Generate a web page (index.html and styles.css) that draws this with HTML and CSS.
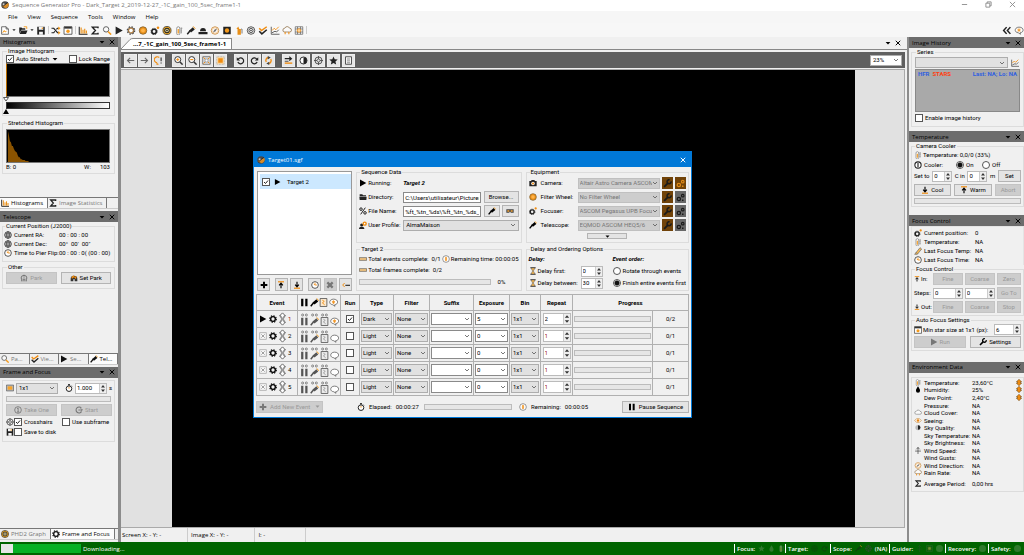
FILE: index.html
```html
<!DOCTYPE html>
<html lang="en">
<head>
<meta charset="utf-8">
<title>Sequence Generator Pro</title>
<link rel="stylesheet" href="styles.css">
</head>
<body>
<svg class="sprite" aria-hidden="true">
  <symbol id="logo" viewBox="0 0 12 12"><circle cx="6" cy="6" r="5.6" fill="#4a4a4a"/><path d="M1 8 11 3a5.6 5.6 0 0 1-4 8z" fill="#d98b26"/><circle cx="4" cy="5" r="1.6" fill="#ccc"/><path d="M2 9 10 2" stroke="#222" stroke-width="1.2"/></symbol>
  <symbol id="new" viewBox="0 0 12 12"><path d="M1.500 1h6l3 3v7h-9zM7.500 1v3h3" fill="#fff" stroke="#444"/><path d="M3 9l2-3 1 2 2-1" stroke="#f59a1b" fill="none" stroke-width="1.300"/></symbol>
  <symbol id="open" viewBox="0 0 12 12"><path d="M1 10V2h3l1 1h4v2H4z" fill="#222"/><path d="M3.500 6H12l-2 4.500H1.500z" fill="#222"/><path d="M7 1h4v3" fill="none" stroke="#f59a1b" stroke-width="1.200"/></symbol>
  <symbol id="save" viewBox="0 0 12 12"><path d="M1 1h10v10.500H1z" fill="#222"/><path d="M3 1h6v4H3zM3.500 7.500h5v4h-5z" fill="#f4f4f4"/><path d="M7 2h1.500v2H7z" fill="#f59a1b"/></symbol>
  <symbol id="folder" viewBox="0 0 12 12"><path d="M1 2h4l1 1.500h4.500V5H1zM.5 5.500h11l-.5 5H1z" fill="#222"/></symbol>
  <symbol id="shuffle" viewBox="0 0 12 12"><path d="M0 3h3l5 6h2M0 9h3l1.500-2M6.500 4.500 8 3h2" fill="none" stroke="#222" stroke-width="1.600"/><path d="M9 .5 12 3 9 5.500zM9 6.500 12 9l-3 2.500z" fill="#f59a1b"/></symbol>
  <symbol id="win" viewBox="0 0 12 12"><path d="M.7 1h10.600v10H.7z" fill="#fff" stroke="#333"/><path d="M1 1h10v2.500H1z" fill="#333"/><circle cx="6" cy="7" r="2.300" fill="#f59a1b"/></symbol>
  <symbol id="hist" viewBox="0 0 12 12"><path d="M1 1v10h11" fill="none" stroke="#222" stroke-width="1.400"/><path d="M3.500 2v8M6 5v5M8.300 3.500V10M10.500 6v4" stroke="#e88f18" stroke-width="1.500"/></symbol>
  <symbol id="sigma" viewBox="0 0 12 12"><path d="M10 3V1.500H2.500L6.500 6l-4 4.500H10V9" fill="none" stroke="#222" stroke-width="1.900"/></symbol>
  <symbol id="mag" viewBox="0 0 12 12"><circle cx="4.800" cy="4.500" r="3.600" fill="#fafafa" stroke="#555" stroke-width="1.200"/><path d="m7.500 7.500 4 4" stroke="#f59a1b" stroke-width="2"/></symbol>
  <symbol id="zin" viewBox="0 0 12 12"><circle cx="5" cy="4.800" r="4" fill="#fafafa" stroke="#333" stroke-width="1.300"/><path d="M3 4.800h4M5 2.800v4" stroke="#f08c10" stroke-width="1.300"/><path d="m8 8 3.500 3.500" stroke="#333" stroke-width="2"/></symbol>
  <symbol id="zout" viewBox="0 0 12 12"><circle cx="5" cy="4.800" r="4" fill="#fafafa" stroke="#333" stroke-width="1.300"/><path d="M3 4.800h4" stroke="#f08c10" stroke-width="1.500"/><path d="m8 8 3.500 3.500" stroke="#333" stroke-width="2"/></symbol>
  <symbol id="play" viewBox="0 0 12 12"><path d="M1.500.7 11 6 1.500 11.300z" fill="currentColor"/></symbol>
  <symbol id="gear" viewBox="0 0 12 12"><circle cx="6" cy="6" r="3.500" fill="none" stroke="currentColor" stroke-width="2"/><circle cx="6" cy="6" r="5" fill="none" stroke="currentColor" stroke-width="1.600" stroke-dasharray="2 1.930"/></symbol>
  <symbol id="gearo" viewBox="0 0 12 12"><circle cx="6" cy="6" r="3.500" fill="#fff" stroke="#444" stroke-width="1.800"/><circle cx="6" cy="6" r="5" fill="none" stroke="#444" stroke-width="1.500" stroke-dasharray="2 1.930"/><circle cx="6" cy="6" r="3.300" fill="none" stroke="#f0a040"/></symbol>
  <symbol id="orb" viewBox="0 0 12 12"><circle cx="6" cy="6" r="5" fill="#f59a1b" stroke="#6f5227" stroke-width="1"/><circle cx="6" cy="6" r="3.200" fill="#ffb347" stroke="#d67a0a" stroke-width=".7"/></symbol>
  <symbol id="foc" viewBox="0 0 12 12"><circle cx="4.800" cy="7.300" r="3" fill="none" stroke="#222" stroke-width="2.200"/><circle cx="4.800" cy="7.300" r="4.200" fill="none" stroke="#222" stroke-dasharray="1.800 1.500"/><circle cx="10" cy="2.200" r="1.700" fill="#f08c10"/></symbol>
  <symbol id="phd" viewBox="0 0 12 12"><circle cx="6" cy="6" r="5.400" fill="#f0a820" stroke="#333"/><circle cx="6" cy="6" r="3" fill="#fff2b0" stroke="#222" stroke-width="1.400"/><circle cx="6" cy="6" r="1.200" fill="#222"/></symbol>
  <symbol id="therm" viewBox="0 0 12 12"><path d="M3 10V3a2 2 0 0 1 4 0v7a2 2 0 0 1-4 0z" fill="#fff" stroke="#777"/><path d="M5 4v6" stroke="#f59a1b" stroke-width="1.600"/><path d="M9 2v8M8 3h2.500M8 5.500h2M8 8h2" stroke="#777" stroke-width=".8"/></symbol>
  <symbol id="scope" viewBox="0 0 12 12"><path d="m1 11 4-5" stroke="currentColor" stroke-width="2"/><path d="m3.500 6 5-4.500 2.500 3L6 8.500z" fill="currentColor"/><path d="m9 .5 2.700 3.200" stroke="#f59a1b" stroke-width="1.300"/></symbol>
  <symbol id="dome" viewBox="0 0 12 12"><path d="M2 7a4 4.500 0 0 1 8 0zM0 8h12v3H0z" fill="#222"/></symbol>
  <symbol id="comp" viewBox="0 0 12 12"><circle cx="6" cy="6" r="5" fill="#fff" stroke="#c98a3b" stroke-width="1.200"/><path d="M9 3 7 7 3 9l2-4z" fill="#777"/><circle cx="6" cy="6" r="3.500" fill="none" stroke="#f0a850" stroke-width=".6"/></symbol>
  <symbol id="flat" viewBox="0 0 12 12"><path d="M1 1h10v10H1z" fill="#222"/><circle cx="6" cy="6" r="2.900" fill="#f59a1b"/></symbol>
  <symbol id="rot" viewBox="0 0 12 12"><path d="M5 .5 2.500 4H4v7.500h4.500V4H6.500z" fill="#e88f18"/><path d="M9 4h1v6" stroke="#555" fill="none"/></symbol>
  <symbol id="rings" viewBox="0 0 12 12"><circle cx="6" cy="6" r="5" fill="none" stroke="currentColor" stroke-width="1"/><circle cx="6" cy="6" r="2.800" fill="none" stroke="currentColor"/><circle cx="6" cy="6" r="1" fill="currentColor"/></symbol>
  <symbol id="checks" viewBox="0 0 12 12"><path d="m1 3 3 3 7-5" fill="none" stroke="#f08c10" stroke-width="2"/><path d="m1 7 3.500 3.500L11 5" fill="none" stroke="#222" stroke-width="2"/></symbol>
  <symbol id="chart" viewBox="0 0 12 12"><path d="M1 1v10h11M2 9l4-2 2 1 3-3" fill="none" stroke="#555" stroke-width="1.200"/><path d="m2 6 3-3 2 2 4-4" fill="none" stroke="#f08c10" stroke-width="1.200"/></symbol>
  <symbol id="cloud" viewBox="0 0 12 12"><path d="M3 9a2.500 2.500 0 0 1 0-5 3.500 3.500 0 0 1 6.500 0A2.500 2.500 0 0 1 9.500 9z" fill="#fafafa" stroke="#777"/></symbol>
  <symbol id="rain" viewBox="0 0 12 12"><path d="M3 8a2.500 2.500 0 0 1 0-5 3.500 3.500 0 0 1 6.500 0A2.500 2.500 0 0 1 9.500 8z" fill="#fafafa" stroke="#8a6a40"/><path d="M3.500 8v3M8.500 8v3" stroke="#f08c10" stroke-width="1.400"/></symbol>
  <symbol id="grid" viewBox="0 0 12 12"><path d="M1 1h10v10H1zM1 4h10M1 8h10M4 1v10M8 1v10" fill="none" stroke="#666"/><circle cx="6" cy="6" r="2.400" fill="#fbd9a5" stroke="#f08c10"/></symbol>
  <symbol id="left" viewBox="0 0 12 12"><path d="M11 6H2M5.500 2.500 2 6l3.500 3.500" fill="none" stroke="#666" stroke-width="1.500"/></symbol>
  <symbol id="right" viewBox="0 0 12 12"><path d="M1 6h9M6.500 2.500 10 6 6.500 9.500" fill="none" stroke="#666" stroke-width="1.500"/></symbol>
  <symbol id="bulb" viewBox="0 0 12 12"><path d="M4 9a4 4 0 1 1 3-7M4 9v2h2" fill="none" stroke="#f08c10" stroke-width="1.500"/><path d="M9.500 2v5M9.500 8.500V10" stroke="#444" stroke-width="1.700"/></symbol>
  <symbol id="fit" viewBox="0 0 12 12"><path d="M1 1h10v10H1z" fill="none" stroke="#555"/><path d="m2 2 8 8M10 2l-8 8" stroke="#f08c10" stroke-width="1.300"/><path d="M4 4h4v4H4z" fill="#fff" stroke="#555" stroke-width=".7"/></symbol>
  <symbol id="one" viewBox="0 0 12 12"><path d="M1 1h10v10H1z" fill="#fbd9a5" stroke="#999" stroke-dasharray="1 1"/><path d="M3 3h6v6H3z" fill="#f08c10"/></symbol>
  <symbol id="ccw" viewBox="0 0 12 12"><path d="M3 4a4 4 0 1 1-.5 4" fill="none" stroke="currentColor" stroke-width="1.600"/><path d="M1 1.500V6h4.500z" fill="currentColor"/></symbol>
  <symbol id="cw" viewBox="0 0 12 12"><path d="M9 4a4 4 0 1 0 .5 4" fill="none" stroke="currentColor" stroke-width="1.600"/><path d="M11 1.500V6H6.500z" fill="currentColor"/></symbol>
  <symbol id="rota" viewBox="0 0 12 12"><path d="M3 8a4 4 0 0 1 3-6M9 4a4 4 0 0 1-3 6" fill="none" stroke="#f08c10" stroke-width="1.800"/><path d="m5 0 4 2-4 2.500zM7 7.500v4.500L3 10z" fill="#444"/></symbol>
  <symbol id="swap" viewBox="0 0 12 12"><path d="M1 3.500h8M7 1l3 2.500L7 6" fill="none" stroke="#222" stroke-width="1.400"/><path d="M1 7h5" stroke="#222"/><path d="M1 9.500h10" stroke="#f08c10" stroke-width="1.800"/></symbol>
  <symbol id="half" viewBox="0 0 12 12"><circle cx="6" cy="6" r="4.700" fill="#fff" stroke="#222" stroke-width="1.200"/><path d="M6 1.500a4.500 4.500 0 0 1 0 9z" fill="#222"/></symbol>
  <symbol id="cross" viewBox="0 0 12 12"><circle cx="6" cy="6" r="4.700" fill="none" stroke="#444" stroke-width="1.200"/><circle cx="6" cy="6" r="2" fill="none" stroke="#444"/><path d="M6 0v4M6 8v4M0 6h4M8 6h4" stroke="#444" stroke-width="1.100"/></symbol>
  <symbol id="star" viewBox="0 0 12 12"><path d="m6 .5 1.600 3.700 4 .4-3 2.700.9 4L6 9.200l-3.500 2.100.9-4-3-2.700 4-.4z" fill="currentColor"/></symbol>
  <symbol id="calc" viewBox="0 0 12 12"><path d="M2 1h8v10H2z" fill="#f4f4f4" stroke="#444" stroke-width="1.200"/><path d="M4 4h4M4 6.500h4M4 9h4" stroke="#777"/></symbol>
  <symbol id="globe" viewBox="0 0 12 12"><circle cx="6" cy="6" r="5" fill="#fff" stroke="#333" stroke-width="1.200"/><ellipse cx="6" cy="6" rx="2.300" ry="5" fill="none" stroke="#333"/><path d="M1 6h10M1.800 3.500h8.400M1.800 8.500h8.400M6 1v10" stroke="#333" stroke-width=".9"/></symbol>
  <symbol id="clock" viewBox="0 0 12 12"><circle cx="6" cy="6" r="5" fill="#fff" stroke="#333" stroke-width="1.200"/><path d="M6 2.500V6l-2-1.500M6 6h3" fill="none" stroke="#f08c10" stroke-width="1.200"/></symbol>
  <symbol id="timer" viewBox="0 0 12 12"><circle cx="6" cy="7" r="4.200" fill="#fff" stroke="#222" stroke-width="1.500"/><path d="M4.500.8h3M6 1v2M9.500 2.500l1 1" stroke="#222" stroke-width="1.300"/><path d="M6 7V4.500" stroke="#f08c10" stroke-width="1.300"/></symbol>
  <symbol id="remain" viewBox="0 0 12 12"><circle cx="6" cy="6" r="5" fill="#fff" stroke="#666"/><path d="M6 2.500 8 5H7v2h1L6 9.500 4 7h1V5H4z" fill="#f08c10"/></symbol>
  <symbol id="house" viewBox="0 0 12 12"><path d="M1.500 6.500a4.500 4.500 0 0 1 9 0M2.500 6v5M9.500 6v5M4.700 11V8h2.600v3" fill="none" stroke="currentColor" stroke-width="1.500"/><path d="M6 1v6" stroke="currentColor"/></symbol>
  <symbol id="spark" viewBox="0 0 12 12"><path d="M1 7a5 4.500 0 0 1 10 0v4H7V8H5v3H1z" fill="#333"/><path d="m2 5 3-3 2 2 3-1-1 5-3-3-3 2z" fill="#f08c10"/></symbol>
  <symbol id="chip" viewBox="0 0 12 12"><path d="M.6 1.600h10.800v8.800H.6z" fill="#bbb" stroke="#555"/><path d="M2.500 3.500h7v5h-7z" fill="#f8a52b"/></symbol>
  <symbol id="circ1" viewBox="0 0 12 12"><circle cx="6" cy="6" r="5" fill="none" stroke="#777" stroke-width="1.300"/><path d="M4.500 4 6.200 3v6M4.500 9h3.400" fill="none" stroke="#777" stroke-width="1.300"/></symbol>
  <symbol id="loop" viewBox="0 0 12 12"><path d="M9.800 8.500A4.500 4.500 0 1 1 9.500 3" fill="none" stroke="#777" stroke-width="1.600"/><path d="M5 6h6M8.500 3.500 11 6 8.500 8.500" fill="none" stroke="#777" stroke-width="1.400"/></symbol>
  <symbol id="plus" viewBox="0 0 12 12"><path d="M6 1v10M1 6h10" stroke="currentColor" stroke-width="3"/></symbol>
  <symbol id="top" viewBox="0 0 12 12"><path d="M1.500 1.200h9" stroke="#f08c10" stroke-width="1.800"/><path d="M6 11V4M3.200 6.500 6 3.200l2.800 3.300" fill="none" stroke="currentColor" stroke-width="1.700"/></symbol>
  <symbol id="bot" viewBox="0 0 12 12"><path d="M1.500 10.800h9" stroke="#f08c10" stroke-width="1.800"/><path d="M6 1v7M3.200 5.500 6 8.800l2.800-3.300" fill="none" stroke="currentColor" stroke-width="1.700"/></symbol>
  <symbol id="xx" viewBox="0 0 12 12"><path d="m2 2 8 8M10 2l-8 8" stroke="#777" stroke-width="3.400"/></symbol>
  <symbol id="back" viewBox="0 0 12 12"><path d="M4 3 1 6l3 3" fill="none" stroke="#f08c10" stroke-width="1.500"/><path d="M5 6.500h7" stroke="#333" stroke-width="1.800"/></symbol>
  <symbol id="bar" viewBox="0 0 12 12"><path d="M.5 4h11v4H.5z" fill="#f8c880" stroke="#555"/></symbol>
  <symbol id="pct" viewBox="0 0 12 12"><path d="m9.500 1-7 10" stroke="#222" stroke-width="1.500"/><circle cx="3" cy="3.200" r="1.900" fill="none" stroke="#222" stroke-width="1.500"/><circle cx="9" cy="8.800" r="1.900" fill="none" stroke="#222" stroke-width="1.500"/></symbol>
  <symbol id="user" viewBox="0 0 12 12"><circle cx="4" cy="6" r="2.300" fill="#222"/><path d="M0 12a4 3.500 0 0 1 8 0z" fill="#222"/><circle cx="8.500" cy="4" r="3.300" fill="#f08c10"/><circle cx="8.500" cy="4" r="1.200" fill="#fff"/></symbol>
  <symbol id="cam" viewBox="0 0 12 12"><path d="M.5 3H3l1-1.500h4L9 3h2.500v8H.5z" fill="#222"/><circle cx="6" cy="6.800" r="2.700" fill="#f4f4f4"/><circle cx="6" cy="6.800" r="1.500" fill="#f08c10"/></symbol>
  <symbol id="wrench" viewBox="0 0 12 12"><path d="m1.500 10.500 5-5" stroke="currentColor" stroke-width="2.400"/><path d="M10.800 3.200a2.700 2.700 0 1 1-2-2.200" fill="none" stroke="currentColor" stroke-width="2"/></symbol>
  <symbol id="cogs" viewBox="0 0 12 12"><circle cx="3.800" cy="8" r="2.200" fill="none" stroke="currentColor" stroke-width="1.700"/><circle cx="9" cy="3.500" r="1.700" fill="none" stroke="currentColor" stroke-width="1.500"/><path d="M8 8.500h2v2H8z" fill="currentColor"/></symbol>
  <symbol id="hour" viewBox="0 0 12 12"><path d="M2 1h8M2 11h8" stroke="#333" stroke-width="1.600"/><path d="M3 1.500h6L6.500 6 9 10.500H3L5.500 6z" fill="#f8b850" stroke="#555" stroke-width=".8"/></symbol>
  <symbol id="goggles" viewBox="0 0 12 12"><path d="M.5 3.500h11v5h-4L6 7 4.500 8.500h-4z" fill="#444"/><path d="M2 5h3v2H2zM7 5h3v2H7z" fill="#f8a838"/></symbol>
  <symbol id="pause" viewBox="0 0 12 12"><path d="M3 1v10M8.500 1v10" stroke="currentColor" stroke-width="3"/></symbol>
  <symbol id="script" viewBox="0 0 12 12"><path d="M1.500.7h9v10.600h-9z" fill="#fbe9cf" stroke="#444"/><path d="M4.500 3 7 4.500 4.500 6.500 7.500 9" fill="none" stroke="#f08c10" stroke-width="1.200"/></symbol>
  <symbol id="bubble" viewBox="0 0 12 12"><path d="M6 1.500c7 0 7 7 1.500 7.500L8 11 5 9C-1 8.500 0 1.500 6 1.500z" fill="#fff" stroke="#555"/></symbol>
  <symbol id="bubbleo" viewBox="0 0 12 12"><path d="M6 1.500c7 0 7 7 1.500 7.500L8 11 5 9C-1 8.500 0 1.500 6 1.500z" fill="#fff" stroke="#555"/><path d="M6 3v5M3.800 4.200l4.400 2.600M8.200 4.200 3.800 6.800" stroke="#f08c10"/></symbol>
  <symbol id="oo" viewBox="0 0 12 4"><circle cx="3.500" cy="2" r="1.400" fill="#ddd" stroke="#666" stroke-width=".9"/><circle cx="8.500" cy="2" r="1.400" fill="#ddd" stroke="#666" stroke-width=".9"/></symbol>
  <symbol id="ud" viewBox="0 0 8 16"><path d="M4 1 7.400 4.500H5.700V7H2.300V4.500H.6zM4 15l3.400-3.500H5.700V9H2.300v2.500H.6z" fill="#fff" stroke="#555" stroke-width="1"/></symbol>
  <symbol id="spin" viewBox="0 0 6 10"><path d="M.8 3.800 3 1.200l2.200 2.600zM.8 6.200 3 8.800l2.200-2.600z" fill="#333"/></symbol>
  <symbol id="xbox" viewBox="0 0 12 12"><path d="M1 1h10v10H1z" fill="#f8f8f8" stroke="#aaa" stroke-width="1.300"/><path d="m3.500 3.500 5 5m0-5-5 5" stroke="#888" stroke-width="1.200"/></symbol>
  <symbol id="power" viewBox="0 0 12 12"><circle cx="6" cy="6" r="4.700" fill="#fff" stroke="#222" stroke-width="1.600"/><path d="M6 3v6" stroke="#222" stroke-width="1.700"/></symbol>
  <symbol id="tape" viewBox="0 0 12 12"><path d="M1 11 9 1l2.500 2L5 11z" fill="#f8b850" stroke="#666"/><path d="m3 8 2 2" stroke="#555"/></symbol>
  <symbol id="drop" viewBox="0 0 12 12"><path d="M6 .5C8 4 9.500 5.500 9.500 8a3.500 3.500 0 0 1-7 0C2.500 5.500 4 4 6 .5z" fill="currentColor"/></symbol>
  <symbol id="eye" viewBox="0 0 12 12"><path d="M.5 6C3 1.500 9 1.500 11.500 6 9 10.500 3 10.500.5 6z" fill="#fff" stroke="#c07a20"/><circle cx="6" cy="6" r="2.200" fill="#e88410"/></symbol>
  <symbol id="moon" viewBox="0 0 12 12"><circle cx="6" cy="6" r="4.500" fill="#bbb"/><path d="M6 2a4 4 0 0 1 0 8z" fill="#222"/></symbol>
  <symbol id="vane" viewBox="0 0 12 12"><path d="M6 0v12M1 7h10M3 4l3-3 3 3" fill="none" stroke="#444" stroke-width="1.200"/></symbol>
  <symbol id="up" viewBox="0 0 12 12"><path d="m6 .5 4.500 4.500H8.500v2h2L6 11.500 1.500 7h2V5h-2z" fill="#f08c10" stroke="#5b3a10" stroke-width=".9"/></symbol>
  <symbol id="caret" viewBox="0 0 8 8"><path d="M.8 2.500h6.400L4 6z" fill="currentColor"/></symbol>
  <symbol id="close" viewBox="0 0 8 8"><path d="m1 1 6 6m0-6L1 7" stroke="currentColor" stroke-width="1.300"/></symbol>
  <symbol id="chev" viewBox="0 0 12 12"><path d="M5.500 1.500 1.500 6l4 4.500M10.500 1.500 6.500 6l4 4.500" fill="none" stroke="#222" stroke-width="2"/></symbol>
</svg>

<header class="titlebar">
  <svg class="i"><use href="#logo"/></svg>
  <span class="grow">Sequence Generator Pro - Dark_Target 2_2019-12-27_-1C_gain_100_5sec_frame1-1</span>
  <span class="winctl">
    <svg viewBox="0 0 8 8"><path d="M1 4h6" stroke="#888"/></svg>
    <svg viewBox="0 0 8 8"><path d="M1 2.500h4.500V7H1zM2.500 2.500V1H7v4.500H5.500" fill="none" stroke="#888"/></svg>
    <svg viewBox="0 0 8 8"><path d="m1 1 6 6m0-6L1 7" stroke="#888"/></svg>
  </span>
</header>
<nav class="menu"><a href="#">File</a><a href="#">View</a><a href="#">Sequence</a><a href="#">Tools</a><a href="#">Window</a><a href="#">Help</a></nav>
<div class="tools">
  <svg class="i"><use href="#new"/></svg><svg class="car"><use href="#caret"/></svg><svg class="i"><use href="#open"/></svg><svg class="car"><use href="#caret"/></svg><svg class="i"><use href="#save"/></svg><i></i>
  <svg class="i"><use href="#shuffle"/></svg><svg class="i"><use href="#win"/></svg><i></i>
  <svg class="i"><use href="#hist"/></svg><svg class="i"><use href="#sigma"/></svg><svg class="i"><use href="#mag"/></svg><svg class="i"><use href="#play"/></svg><svg class="i"><use href="#gearo"/></svg><svg class="i"><use href="#orb"/></svg><svg class="i"><use href="#foc"/></svg><svg class="i"><use href="#phd"/></svg><svg class="i"><use href="#therm"/></svg><svg class="i"><use href="#scope"/></svg><svg class="i"><use href="#dome"/></svg><svg class="i"><use href="#comp"/></svg><svg class="i"><use href="#flat"/></svg><svg class="i"><use href="#rot"/></svg><svg class="i"><use href="#rings"/></svg><svg class="i"><use href="#checks"/></svg><svg class="i"><use href="#chart"/></svg><svg class="i"><use href="#rain"/></svg><svg class="i"><use href="#grid"/></svg><i></i>
  <span class="grow"></span>
  <svg class="i"><use href="#chev"/></svg><svg class="i last"><use href="#bubbleo"/></svg>
</div>

<main class="work">
  <aside class="side left">
    <section class="panel p-hist">
      <h2><span class="grow">Histograms</span><svg class="s"><use href="#caret"/></svg><svg class="s"><use href="#close"/></svg></h2>
      <div class="pbody">
        <fieldset><legend>Image Histogram</legend>
          <div class="row hopts"><label><input type="checkbox" checked>Auto Stretch</label><svg class="s"><use href="#caret"/></svg><label class="push"><input type="checkbox">Lock Range</label></div>
          <div class="plot first"></div>
          <svg class="mark" viewBox="0 0 6 5"><path d="M.5.5h5L3 4z" fill="#fff" stroke="#333" stroke-width=".8"/></svg>
          <div class="ramp"></div>
          <svg class="mark" viewBox="0 0 6 5"><path d="M0 5h6L3 0z" fill="#000"/></svg>
        </fieldset>
        <fieldset class="stretch"><legend>Stretched Histogram</legend>
          <svg class="plot" viewBox="0 0 104 34" preserveAspectRatio="none"><path d="M1 34V1l1 5 1 6 1 1 1 4 1 0 1 3 1 2 1 1 1 1 1 3 1 2 1 0 1 2 1 0 1 1 2 0 1 1 3 0v1z" fill="#8a5300"/></svg>
          <div class="row bw"><span>B: 0</span><span class="push">W:</span><span>103</span></div>
        </fieldset>
      </div>
      <div class="tabs"><button class="on"><svg class="i"><use href="#hist"/></svg>Histograms</button><button><svg class="i"><use href="#sigma"/></svg>Image Statistics</button></div>
    </section>
    <section class="panel p-tel">
      <h2><span class="grow">Telescope</span><svg class="s"><use href="#caret"/></svg><svg class="s"><use href="#close"/></svg></h2>
      <div class="pbody">
        <fieldset class="pos"><legend>Current Position (J2000)</legend>
          <div class="coord"><svg class="i"><use href="#globe"/></svg><span>Current RA:</span><span>00 : 00 : 00</span></div>
          <div class="coord"><svg class="i"><use href="#globe"/></svg><span>Current Dec:</span><span>00° &nbsp;00' &nbsp;00"</span></div>
          <div class="coord"><svg class="i"><use href="#clock"/></svg><span>Time to Pier Flip:</span><span>00 : 00 : 0( (00 : 00)</span></div>
        </fieldset>
        <fieldset class="other"><legend>Other</legend>
          <div class="pair"><button disabled><svg class="i dis"><use href="#house"/></svg>Park</button><button><svg class="i"><use href="#spark"/></svg>Set Park</button></div>
        </fieldset>
      </div>
      <div class="tabs four"><button><svg class="i"><use href="#mag"/></svg>Pa...</button><button><svg class="i"><use href="#checks"/></svg>Vie...</button><button><svg class="i"><use href="#play"/></svg>Se...</button><button class="on"><svg class="i"><use href="#scope"/></svg>Tel...</button></div>
    </section>
    <section class="panel p-frame">
      <h2><span class="grow">Frame and Focus</span><svg class="s"><use href="#caret"/></svg><svg class="s"><use href="#close"/></svg></h2>
      <div class="pbody">
        <div class="box">
          <div class="row frow"><svg class="i"><use href="#chip"/></svg><select aria-label="Binning" class="grow"><option>1x1</option></select><svg class="i tm"><use href="#timer"/></svg><span class="num grow"><input aria-label="Seconds" value="1.000"><svg><use href="#spin"/></svg></span>s</div>
          <div class="prog"></div>
          <div class="pair"><button disabled><svg class="i"><use href="#circ1"/></svg>Take One</button><button disabled><svg class="i"><use href="#loop"/></svg>Start</button></div>
          <div class="fopts"><label><svg class="i"><use href="#cross"/></svg><input type="checkbox" checked>Crosshairs</label><label><input type="checkbox">Use subframe</label><label><svg class="i"><use href="#save"/></svg><input type="checkbox">Save to disk</label></div>
        </div>
      </div>
      <div class="tabs"><button><svg class="i"><use href="#phd"/></svg>PHD2 Graph</button><button class="on"><svg class="i"><use href="#gear"/></svg>Frame and Focus</button></div>
    </section>
  </aside>

  <section class="doc">
    <div class="doctabs"><div class="slant"><svg viewBox="0 0 12 11" preserveAspectRatio="none"><path d="M0 11 9 1.500Q10 .5 12 .5V11z" fill="#fff"/><path d="M0 11 9 1.500Q10 .5 12 .5" fill="none" stroke="#888"/></svg><b>...7_-1C_gain_100_5sec_frame1-1</b></div><span class="grow"></span><svg class="s"><use href="#caret"/></svg><svg class="s"><use href="#close"/></svg></div>
    <div class="dtools">
      <div><button aria-label="Back"><svg class="i"><use href="#left"/></svg></button><button aria-label="Forward"><svg class="i"><use href="#right"/></svg></button><button aria-label="Hint"><svg class="i"><use href="#bulb"/></svg></button></div>
      <div><button aria-label="Zoom in"><svg class="i"><use href="#zin"/></svg></button><button aria-label="Zoom out"><svg class="i"><use href="#zout"/></svg></button><button aria-label="Fit"><svg class="i"><use href="#fit"/></svg></button><button aria-label="Actual size"><svg class="i"><use href="#one"/></svg></button></div>
      <div><button aria-label="Rotate left"><svg class="i"><use href="#ccw"/></svg></button><button aria-label="Rotate right"><svg class="i"><use href="#cw"/></svg></button><button aria-label="Rotate"><svg class="i"><use href="#rota"/></svg></button></div>
      <div class="wide"><button aria-label="Swap"><svg class="i"><use href="#swap"/></svg></button><button aria-label="Contrast"><svg class="i"><use href="#half"/></svg></button><button aria-label="Crosshair"><svg class="i"><use href="#cross"/></svg></button><button aria-label="Stars"><svg class="i"><use href="#star"/></svg></button><button aria-label="Statistics"><svg class="i"><use href="#calc"/></svg></button></div>
      <span class="grow"></span>
      <select aria-label="Zoom" class="zoomsel"><option>23%</option></select>
    </div>
    <div class="canvas">
      <div class="image"></div>
      <form class="dialog">
        <div class="dtitle"><svg class="i"><use href="#logo"/></svg><span class="grow">Target01.sgf</span><svg class="s"><use href="#close"/></svg></div>
        <div class="dbody">
          <div class="upper">
            <div class="targets">
              <div class="list"><label class="item"><input type="checkbox" checked><svg class="i"><use href="#play"/></svg>Target 2</label></div>
              <div class="tbtns"><button type="button" aria-label="Add"><svg class="i"><use href="#plus"/></svg></button><span></span><button type="button" aria-label="Move up"><svg class="i"><use href="#top"/></svg></button><button type="button" aria-label="Move down"><svg class="i"><use href="#bot"/></svg></button><span></span><button type="button" aria-label="Schedule"><svg class="i"><use href="#clock"/></svg></button><button type="button" aria-label="Delete" disabled><svg class="i"><use href="#xx"/></svg></button><button type="button" aria-label="Reset"><svg class="i"><use href="#back"/></svg></button></div>
            </div>
            <div class="col">
              <fieldset class="tall"><legend>Sequence Data</legend>
                <div class="fr"><svg class="i"><use href="#play"/></svg><span>Running:</span><strong class="em">Target 2</strong></div>
                <div class="fr"><svg class="i"><use href="#folder"/></svg><label for="dir">Directory:</label><input id="dir" value="C:\Users\utilisateur\Pictures"><button type="button" class="brw">Browse...</button></div>
                <div class="fr"><svg class="i"><use href="#pct"/></svg><label for="fn">File Name:</label><input id="fn" value="%ft_%tn_%ds\%ft_%tn_%ds_"><span class="two"><button type="button" aria-label="Pattern"><svg class="i"><use href="#scope"/></svg></button><button type="button" aria-label="Preview"><svg class="i"><use href="#goggles"/></svg></button></span></div>
                <div class="fr"><svg class="i"><use href="#user"/></svg><label for="up1">User Profile:</label><select id="up1"><option>AlmaMaison</option></select></div>
              </fieldset>
              <fieldset class="short"><legend>Target 2</legend>
                <div class="tl"><svg class="i"><use href="#bar"/></svg>Total events complete: &nbsp;0/1<span class="push rem"><svg class="i"><use href="#remain"/></svg>Remaining time: 00:00:05</span></div>
                <div class="tl"><svg class="i"><use href="#bar"/></svg>Total frames complete: &nbsp;0/2</div>
                <div class="tl last"><div class="prog grow"></div><span class="pc">0%</span></div>
              </fieldset>
            </div>
            <div class="col">
              <fieldset class="tall"><legend>Equipment</legend>
                <div class="eq"><svg class="i"><use href="#cam"/></svg><label for="e1">Camera:</label><select id="e1" disabled><option>Altair Astro Camera ASCOM</option></select><button type="button" class="br" aria-label="Camera settings"><svg class="i"><use href="#wrench"/></svg></button><button type="button" class="br" aria-label="Connect camera"><svg class="i or"><use href="#cogs"/></svg></button></div>
                <div class="eq"><svg class="i"><use href="#orb"/></svg><label for="e2">Filter Wheel:</label><select id="e2" disabled><option>No Filter Wheel</option></select><button type="button" class="br" aria-label="Filter wheel settings"><svg class="i"><use href="#wrench"/></svg></button><button type="button" class="gr" aria-label="Connect filter wheel"><svg class="i"><use href="#cogs"/></svg></button></div>
                <div class="eq"><svg class="i"><use href="#foc"/></svg><label for="e3">Focuser:</label><select id="e3" disabled><option>ASCOM Pegasus UPB Focuser</option></select><button type="button" class="br" aria-label="Focuser settings"><svg class="i"><use href="#wrench"/></svg></button><button type="button" class="gr" aria-label="Connect focuser"><svg class="i"><use href="#cogs"/></svg></button></div>
                <div class="eq"><svg class="i"><use href="#scope"/></svg><label for="e4">Telescope:</label><select id="e4" disabled><option>EQMOD ASCOM HEQ5/6</option></select><button type="button" class="br" aria-label="Telescope settings"><svg class="i"><use href="#wrench"/></svg></button><button type="button" class="gr" aria-label="Connect telescope"><svg class="i"><use href="#cogs"/></svg></button></div>
                <button type="button" class="expand" aria-label="More"><svg class="car"><use href="#caret"/></svg></button>
              </fieldset>
              <fieldset class="short"><legend>Delay and Ordering Options</legend>
                <div class="ord">
                  <div><strong class="em">Delay:</strong>
                    <div class="dl"><svg class="i"><use href="#hour"/></svg><label for="d1">Delay first:</label><span class="num"><input id="d1" value="0"><svg><use href="#spin"/></svg></span></div>
                    <div class="dl"><svg class="i"><use href="#hour"/></svg><label for="d2">Delay between:</label><span class="num"><input id="d2" value="30"><svg><use href="#spin"/></svg></span></div></div>
                  <div><strong class="em">Event order:</strong>
                    <label class="dl"><input type="radio" name="ord">Rotate through events</label>
                    <label class="dl"><input type="radio" name="ord" checked>Finish entire events first</label></div>
                </div>
              </fieldset>
            </div>
          </div>
          <table class="events">
            <colgroup><col class="c1"><col class="c2"><col class="c3"><col class="c4"><col class="c5"><col class="c6"><col class="c7"><col class="c8"><col class="c9"><col class="c10"><col class="c11"></colgroup>
            <thead><tr><th>Event</th><th><div class="ic"><svg class="i"><use href="#pause"/></svg><svg class="i"><use href="#scope"/></svg><svg class="i"><use href="#script"/></svg><svg class="i"><use href="#bubbleo"/></svg></div></th><th>Run</th><th>Type</th><th>Filter</th><th>Suffix</th><th>Exposure</th><th>Bin</th><th>Repeat</th><th colspan="2">Progress</th></tr></thead>
            <tbody>
            <tr><td><div class="ev"><svg class="i"><use href="#play"/></svg><svg class="i"><use href="#gear"/></svg><svg class="ud"><use href="#ud"/></svg><span class="red">1</span></div></td><td><div class="ic dim"><span><svg class="oo"><use href="#oo"/></svg><svg class="i"><use href="#pause"/></svg></span><span><svg class="oo"><use href="#oo"/></svg><svg class="i"><use href="#scope"/></svg></span><span class="sc"><svg class="oo"><use href="#oo"/></svg><svg class="i"><use href="#script"/></svg></span><span><svg class="oo"></svg><svg class="i"><use href="#bubbleo"/></svg></span></div></td><td><input type="checkbox" aria-label="Run 1" checked></td><td><select aria-label="Type 1"><option>Dark</option></select></td><td><select aria-label="Filter 1"><option>None</option></select></td><td><select class="w" aria-label="Suffix 1"><option></option></select></td><td><select class="w" aria-label="Exposure 1"><option>5</option></select></td><td><select aria-label="Bin 1"><option>1x1</option></select></td><td><span class="num"><input aria-label="Repeat 1" value="2"><svg><use href="#spin"/></svg></span></td><td><div class="prog"></div></td><td>0/2</td></tr>
            <tr><td><div class="ev"><svg class="i"><use href="#xbox"/></svg><svg class="i"><use href="#gear"/></svg><svg class="ud"><use href="#ud"/></svg><span>2</span></div></td><td><div class="ic dim"><span><svg class="oo"><use href="#oo"/></svg><svg class="i"><use href="#pause"/></svg></span><span><svg class="oo"><use href="#oo"/></svg><svg class="i"><use href="#scope"/></svg></span><span class="sc"><svg class="oo"><use href="#oo"/></svg><svg class="i"><use href="#script"/></svg></span><span><svg class="oo"></svg><svg class="i"><use href="#bubble"/></svg></span></div></td><td><input type="checkbox" aria-label="Run 2"></td><td><select aria-label="Type 2"><option>Light</option></select></td><td><select aria-label="Filter 2"><option>None</option></select></td><td><select class="w" aria-label="Suffix 2"><option></option></select></td><td><select class="w" aria-label="Exposure 2"><option>0</option></select></td><td><select aria-label="Bin 2"><option>1x1</option></select></td><td><span class="num red"><input aria-label="Repeat 2" value="1"><svg><use href="#spin"/></svg></span></td><td><div class="prog"></div></td><td>0/1</td></tr>
            <tr><td><div class="ev"><svg class="i"><use href="#xbox"/></svg><svg class="i"><use href="#gear"/></svg><svg class="ud"><use href="#ud"/></svg><span>3</span></div></td><td><div class="ic dim"><span><svg class="oo"><use href="#oo"/></svg><svg class="i"><use href="#pause"/></svg></span><span><svg class="oo"><use href="#oo"/></svg><svg class="i"><use href="#scope"/></svg></span><span class="sc"><svg class="oo"><use href="#oo"/></svg><svg class="i"><use href="#script"/></svg></span><span><svg class="oo"></svg><svg class="i"><use href="#bubble"/></svg></span></div></td><td><input type="checkbox" aria-label="Run 3"></td><td><select aria-label="Type 3"><option>Light</option></select></td><td><select aria-label="Filter 3"><option>None</option></select></td><td><select class="w" aria-label="Suffix 3"><option></option></select></td><td><select class="w" aria-label="Exposure 3"><option>0</option></select></td><td><select aria-label="Bin 3"><option>1x1</option></select></td><td><span class="num red"><input aria-label="Repeat 3" value="1"><svg><use href="#spin"/></svg></span></td><td><div class="prog"></div></td><td>0/1</td></tr>
            <tr><td><div class="ev"><svg class="i"><use href="#xbox"/></svg><svg class="i"><use href="#gear"/></svg><svg class="ud"><use href="#ud"/></svg><span>4</span></div></td><td><div class="ic dim"><span><svg class="oo"><use href="#oo"/></svg><svg class="i"><use href="#pause"/></svg></span><span><svg class="oo"><use href="#oo"/></svg><svg class="i"><use href="#scope"/></svg></span><span class="sc"><svg class="oo"><use href="#oo"/></svg><svg class="i"><use href="#script"/></svg></span><span><svg class="oo"></svg><svg class="i"><use href="#bubble"/></svg></span></div></td><td><input type="checkbox" aria-label="Run 4"></td><td><select aria-label="Type 4"><option>Light</option></select></td><td><select aria-label="Filter 4"><option>None</option></select></td><td><select class="w" aria-label="Suffix 4"><option></option></select></td><td><select class="w" aria-label="Exposure 4"><option>0</option></select></td><td><select aria-label="Bin 4"><option>1x1</option></select></td><td><span class="num red"><input aria-label="Repeat 4" value="1"><svg><use href="#spin"/></svg></span></td><td><div class="prog"></div></td><td>0/1</td></tr>
            <tr><td><div class="ev"><svg class="i"><use href="#xbox"/></svg><svg class="i"><use href="#gear"/></svg><svg class="ud"><use href="#ud"/></svg><span>5</span></div></td><td><div class="ic dim"><span><svg class="oo"><use href="#oo"/></svg><svg class="i"><use href="#pause"/></svg></span><span><svg class="oo"><use href="#oo"/></svg><svg class="i"><use href="#scope"/></svg></span><span class="sc"><svg class="oo"><use href="#oo"/></svg><svg class="i"><use href="#script"/></svg></span><span><svg class="oo"></svg><svg class="i"><use href="#bubble"/></svg></span></div></td><td><input type="checkbox" aria-label="Run 5"></td><td><select aria-label="Type 5"><option>Light</option></select></td><td><select aria-label="Filter 5"><option>None</option></select></td><td><select class="w" aria-label="Suffix 5"><option></option></select></td><td><select class="w" aria-label="Exposure 5"><option>0</option></select></td><td><select aria-label="Bin 5"><option>1x1</option></select></td><td><span class="num red"><input aria-label="Repeat 5" value="1"><svg><use href="#spin"/></svg></span></td><td><div class="prog"></div></td><td>0/1</td></tr>
            </tbody>
          </table>
          <div class="dfoot"><button type="button" class="add" disabled><svg class="i dis"><use href="#plus"/></svg><span>Add New Event</span><svg class="car"><use href="#caret"/></svg></button><span class="el"><svg class="i"><use href="#timer"/></svg><span>Elapsed:</span><span>00:00:27</span></span><div class="prog grow"></div><span class="re"><svg class="i"><use href="#remain"/></svg><span>Remaining:</span><span>00:00:05</span></span><button type="button" class="ps"><svg class="i"><use href="#pause"/></svg>Pause Sequence</button></div>
        </div>
      </form>
    </div>
    <div class="coords"><span>Screen X: - Y: -</span><span>Image X: - Y: -</span><span>I: -</span></div>
  </section>

  <aside class="side right">
    <section class="panel r1">
      <h2><span class="grow">Image History</span><svg class="s"><use href="#caret"/></svg><svg class="s"><use href="#close"/></svg></h2>
      <div class="pbody"><fieldset><legend>Series</legend>
        <div class="row series"><select class="grow" aria-label="Series"><option></option></select><svg class="i"><use href="#chart"/></svg></div>
        <div class="hfr"><b>HFR</b><b class="st">STARS</b><b class="push">Last: NA; Lo: NA</b></div>
        <label class="row"><input type="checkbox">Enable image history</label>
      </fieldset></div>
    </section>
    <section class="panel r2">
      <h2><span class="grow">Temperature</span><svg class="s"><use href="#caret"/></svg><svg class="s"><use href="#close"/></svg></h2>
      <div class="pbody"><fieldset><legend>Camera Cooler</legend>
        <div class="row t1"><svg class="i"><use href="#therm"/></svg>Temperature: 0,0/0 (33%)</div>
        <div class="row t2"><svg class="i"><use href="#power"/></svg><span class="cl">Cooler:</span><label><input type="radio" name="cool" checked>On</label><label><input type="radio" name="cool">Off</label></div>
        <div class="row t3"><label for="st">Set to</label><span class="num"><input id="st" value="0"><svg><use href="#spin"/></svg></span><label for="ci">C in</label><span class="num"><input id="ci" value="0"><svg><use href="#spin"/></svg></span>m<button class="push">Set</button></div>
        <div class="three"><button><svg class="i"><use href="#bot"/></svg>Cool</button><button><svg class="i"><use href="#top"/></svg>Warm</button><button disabled>Abort</button></div>
        <div class="prog"></div>
      </fieldset></div>
    </section>
    <section class="panel r3">
      <h2><span class="grow">Focus Control</span><svg class="s"><use href="#caret"/></svg><svg class="s"><use href="#close"/></svg></h2>
      <div class="pbody">
        <div class="box fpos">
          <div class="fx"><svg class="i"><use href="#foc"/></svg><span>Current position:</span><span>0</span></div>
          <div class="fx"><svg class="i"><use href="#therm"/></svg><span>Temperature:</span><span>NA</span></div>
          <div class="fx"><svg class="i"><use href="#tape"/></svg><span>Last Focus Temp:</span><span>NA</span></div>
          <div class="fx"><svg class="i"><use href="#clock"/></svg><span>Last Focus Time:</span><span>NA</span></div>
        </div>
        <fieldset class="fc"><legend>Focus Control</legend>
          <div class="fg"><span class="io"><svg class="i"><use href="#top"/></svg>In:</span><button disabled>Fine</button><button disabled>Coarse</button><button disabled>Zero</button>
          <label for="s1">Steps:</label><span class="num"><input id="s1" value="0"><svg><use href="#spin"/></svg></span><span class="num"><input aria-label="Go to position" value="0"><svg><use href="#spin"/></svg></span><button disabled>Go To</button>
          <span class="io"><svg class="i"><use href="#bot"/></svg>Out:</span><button disabled>Fine</button><button disabled>Coarse</button><button disabled>Stop</button></div>
        </fieldset>
        <fieldset class="af"><legend>Auto Focus Settings</legend>
          <div class="row"><svg class="i"><use href="#win"/></svg><label for="ms">Min star size at 1x1 (px):</label><span class="num push"><input id="ms" value="6"><svg><use href="#spin"/></svg></span></div>
          <div class="pair"><button disabled><svg class="i dis"><use href="#play"/></svg>Run</button><button><svg class="i"><use href="#wrench"/></svg>Settings</button></div>
        </fieldset>
      </div>
    </section>
    <section class="panel r4">
      <h2><span class="grow">Environment Data</span><svg class="s"><use href="#caret"/></svg><svg class="s"><use href="#close"/></svg></h2>
      <div class="pbody"><div class="box env">
        <div class="rows">
          <svg class="i"><use href="#therm"/></svg><span>Temperature:</span><span>23,60°C</span><svg class="i"><use href="#up"/></svg>
          <svg class="i"><use href="#drop"/></svg><span>Humidity:</span><span>25%</span><svg class="i"><use href="#up"/></svg>
          <i></i><span>Dew Point:</span><span>2,40°C</span><svg class="i"><use href="#up"/></svg>
          <i></i><span>Pressure:</span><span>NA</span><i></i>
          <svg class="i"><use href="#cloud"/></svg><span>Cloud Cover:</span><span>NA</span><i></i>
          <svg class="i"><use href="#eye"/></svg><span>Seeing:</span><span>NA</span><i></i>
          <svg class="i"><use href="#moon"/></svg><span>Sky Quality:</span><span>NA</span><i></i>
          <i></i><span>Sky Temperature:</span><span>NA</span><i></i>
          <i></i><span>Sky Brightness:</span><span>NA</span><i></i>
          <svg class="i"><use href="#vane"/></svg><span>Wind Speed:</span><span>NA</span><i></i>
          <i></i><span>Wind Gusts:</span><span>NA</span><i></i>
          <svg class="i"><use href="#comp"/></svg><span>Wind Direction:</span><span>NA</span><i></i>
          <svg class="i"><use href="#rain"/></svg><span>Rain Rate:</span><span>NA</span><i></i>
        </div>
        <div class="rows avg"><svg class="i"><use href="#sigma"/></svg><span>Average Period:</span><span>0,00 hrs</span><i></i></div>
      </div></div>
    </section>
  </aside>
</main>

<footer class="status">
  <div class="busy"><span></span></div>Downloading...<span class="grow"></span>
  <div class="st1">Focus:<svg class="i"><use href="#star"/></svg><svg class="i"><use href="#drop"/></svg><svg class="i"><use href="#therm"/></svg></div>
  <div class="st2">Target:<svg class="i"><use href="#rings"/></svg><svg class="i"><use href="#cw"/></svg></div>
  <div class="st3">Scope:<svg class="i"><use href="#scope"/></svg><svg class="i"><use href="#cross"/></svg>(NA)</div>
  <div class="st4">Guider:<svg class="i"><use href="#vane"/></svg><svg class="i"><use href="#grid"/></svg><em></em></div>
  <div class="st5">Recovery:<em></em></div>
  <div class="st6">Safety:<em></em></div>
</footer>
</body>
</html>
```
FILE: styles.css
```css
* { box-sizing: border-box; }
html, body { margin: 0; height: 100%; }
body { display: flex; flex-direction: column; background: #f0f0f0; color: #000; font: 6px/8px Roboto, "Liberation Sans", Arial, sans-serif; overflow: hidden; white-space: nowrap; }
.sprite { position: absolute; width: 0; height: 0; }
svg { flex: none; display: block; overflow: visible; }
.i { width: 8px; height: 8px; }
.s { width: 6px; height: 6px; color: #000; }
.car { width: 5px; height: 5px; }
.grow { flex: 1; min-width: 0; }
.push { margin-left: auto; }
.row { display: flex; align-items: center; }
.dis { color: #777; }
.red { color: #a02020; }
button, input, select { font: inherit; color: inherit; margin: 0; padding: 0; border-radius: 0; min-width: 0; }
button { display: flex; align-items: center; justify-content: center; gap: 2px; background: #e4e4e4; border: 1px solid #b4b4b4; height: 12px; }
button:disabled { background: #cdcdcd; color: #999; border-color: #c4c4c4; }
label { display: flex; align-items: center; }
input { border: 1px solid #8a8a8a; background: #fff; height: 11px; padding: 0 1px; }
input[type=checkbox] { appearance: none; flex: none; width: 8px; height: 8px; padding: 0; border: 1px solid #555; margin-right: 2px; }
input[type=checkbox]:checked { background: #fff url("data:image/svg+xml,%3Csvg xmlns='http://www.w3.org/2000/svg' viewBox='0 0 6 6'%3E%3Cpath d='M1 3l1.500 1.500L5 1.500' fill='none' stroke='%23222'/%3E%3C/svg%3E"); }
input[type=radio] { appearance: none; flex: none; width: 8px; height: 8px; padding: 0; border: 1px solid #555; border-radius: 50%; margin-right: 2px; }
input[type=radio]:checked { background: radial-gradient(#111 0 2px, #fff 3px); }
select { appearance: none; height: 11px; width: 100%; padding: 0 8px 0 2px; border: 1px solid #adadad; background: #e1e1e1 url("data:image/svg+xml,%3Csvg xmlns='http://www.w3.org/2000/svg' viewBox='0 0 6 6'%3E%3Cpath d='M1 2l2 2 2-2' fill='none' stroke='%23555' stroke-width='.8'/%3E%3C/svg%3E") right 2px center / 6px 6px no-repeat; overflow: hidden; }
select:disabled { background-color: #cdcdcd; color: #777; border-color: #c0c0c0; opacity: 1; }
select.w { background-color: #fff; border-color: #8a8a8a; }
.num { display: flex; align-items: stretch; height: 11px; min-width: 0; background: #fff; border: 1px solid #bbb; }
.num input { flex: 1; width: 0; border: 0; height: auto; background: none; }
.num svg { width: 7px; height: 9px; background: #eee; border-left: 1px solid #ccc; }
.prog { height: 6px; background: #e6e6e6; border: 1px solid #bcbcbc; }
fieldset, .box { margin: 0; padding: 0 3px; border: 1px solid #dcdcdc; min-width: 0; }
legend { margin-left: 1px; padding: 0 1px; line-height: 8px; }
.em { font-style: italic; font-weight: bold; }

.titlebar, .menu, .tabs, .panel h2, .doctabs, .dtitle, .status, .coords { font-family: "Open Sans", "Noto Sans", sans-serif; }
.titlebar { display: flex; align-items: center; height: 11px; padding: 0 8px 2px 1px; gap: 3px; background: #fff; color: #777; }
.winctl { display: flex; gap: 17px; }
.winctl svg { width: 7px; height: 7px; }
.menu { display: flex; height: 12px; padding-left: 8px; gap: 10px; line-height: 12px; background: #f6f6f6; }
.menu a { color: #000; text-decoration: none; }
.tools { display: flex; align-items: center; height: 14px; gap: 2px; background: #f7f7f7; color: #222; }
.tools .i { width: 10px; height: 9px; }
.tools .car { width: 4px; height: 4px; }
.tools i { width: 1px; height: 8px; background: #ccc; }

.work { flex: 1; display: flex; min-height: 0; }
.side { display: flex; flex-direction: column; background: #f0f0f0; }
.left { width: 121px; border-right: 3px solid #8c8c8c; }
.right { width: 117px; border-left: 2px solid #8c8c8c; }
.panel { display: flex; flex-direction: column; min-height: 0; }
.panel h2 { display: flex; align-items: center; flex: none; gap: 4px; height: 11px; margin: 0; padding: 0 3px; background: #6c6c6c; font-size: 6px; font-weight: normal; color: #000; }
.pbody { flex: 1; min-height: 0; padding: 0 3px 0 2px; }
.p-hist { flex: 174 1 0; }
.p-tel { flex: 155 1 0; }
.p-frame { flex: 175 1 0; }
.tabs { display: flex; flex: none; height: 12px; margin-bottom: 2px; border-top: 1px solid #777; border-bottom: 1px solid #ccc; }
.tabs button { height: 10px; border: 0; border-right: 1px solid #777; background: #f0f0f0; color: #777; padding: 0 4px 0 1px; }
.tabs .on { color: #000; background: #fcfcfc; }
.tabs .i { color: #111; }
.four button { flex: 1; justify-content: flex-start; }
.p-hist h2 { height: 10px; }
.hopts { gap: 3px; }
.plot { display: block; width: 100%; height: 34px; background: #000; border: 1px solid #777; }
.first { border-left-color: #b86c00; }
.mark { width: 6px; height: 5px; margin-left: -3px; }
.ramp { height: 7px; border: 1px solid #333; background: linear-gradient(90deg, #000, #fff); }
.p-hist fieldset { padding: 0 4px 1px 3px; }
.stretch { margin-top: 3px; }
.stretch .plot { margin-top: 2px; }
.p-hist .bw { gap: 9px; padding-bottom: 1px; }
.coord { display: grid; grid-template-columns: 10px 45px auto; align-items: center; height: 9px; }
.pos { padding: 0 0 4px 1px; }
.other { margin-top: 1px; padding-bottom: 4px; }
.other .pair { margin-top: 1px; }
.pair { display: grid; grid-template-columns: 1fr 1fr; gap: 4px; }
.p-frame .box { margin-top: 2px; padding: 2px 2px 5px 3px; }
.frow { gap: 2px; }
.tm { margin-left: 5px; }
.p-frame .prog { margin: 2px 1px 2px 0; }
.fopts { display: grid; grid-template-columns: 56px 1fr; row-gap: 2px; margin-top: 2px; }

.doc { flex: 1; display: flex; flex-direction: column; min-width: 0; }
.doctabs { display: flex; align-items: center; height: 13px; padding-right: 6px; gap: 4px; border-bottom: 1px solid #888; }
.slant { display: flex; align-self: flex-end; height: 11px; line-height: 11px; }
.slant svg { width: 12px; height: 11px; }
.slant b { background: #fff; border: 1px solid #888; border-width: 1px 1px 0 0; padding-right: 5px; line-height: 10px; }
.dtools { display: flex; align-items: center; gap: 7px; height: 16px; margin: 2px 2px 1px 0; padding: 0 3px; background: #606060; }
.dtools div { display: flex; gap: 1px; }
.dtools .wide { gap: 2px; }
.dtools button { width: 13px; height: 13px; background: #e6e6e6; border-color: #eee; color: #222; }
.dtools .i { width: 9px; height: 9px; }
.dtools .zoomsel { width: 32px; height: 11px; background-color: #fff; }
.canvas { flex: 1; position: relative; min-height: 0; margin-right: 2px; border: 1px solid #aaa; border-left: 0; background: #e1e1e1; padding: 0 49px 0 51px; }
.image { height: 100%; background: #000; }
.coords { display: flex; height: 14px; line-height: 14px; }
.coords span { border-right: 1px solid #ccc; padding-right: 26px; margin-right: 3px; }
.coords span:first-child { padding-left: 1px; }
.coords span:last-child { padding-right: 40px; }

.dialog { position: absolute; left: 132px; top: 81px; width: 439px; border: 1px solid #0078d7; background: #f0f0f0; }
.dtitle { display: flex; align-items: center; height: 15px; padding: 0 5px 0 3px; gap: 3px; background: #0078d7; color: #fff; }
.dtitle .s { color: #fff; }
.dbody { padding: 1px 2px 4px 2px; }
.upper { display: grid; grid-template-columns: 98fr 164fr 165fr; gap: 4px; }
.targets { display: flex; flex-direction: column; margin-top: 3px; padding-left: 1px; }
.list { flex: 1; background: #fff; border: 1px solid #999; padding: 2px 0 2px 2px; }
.item { height: 15px; padding-left: 2px; background: #cce8ff; }
.item .i { margin: 0 6px 0 2px; width: 7px; }
.tbtns { display: flex; margin-top: 3px; justify-content: space-between; }
.tbtns button { width: 13px; height: 13px; }
.col { display: flex; flex-direction: column; gap: 2px; }
.tall { height: 75px; padding: 0 2px; }
.short { height: 46px; padding: 0 2px; }
.fr { display: grid; grid-template-columns: 9px 35px 1fr 35px; align-items: center; height: 14px; }
.fr input { margin-right: 3px; width: auto; }
.fr select { grid-column: 3 / 5; }
.two { display: grid; grid-template-columns: 1fr 1fr; gap: 2px; }
.tl { display: flex; align-items: center; gap: 1px; height: 11px; }
.tl.last { height: 14px; }
.rem { display: flex; gap: 1px; align-items: center; }
.pc { width: 27px; padding-left: 6px; }
.eq { display: grid; grid-template-columns: 10px 35px 1fr 11px 11px; column-gap: 2px; align-items: center; height: 14px; }
.eq select { padding: 0 7px 0 1px; background-position: right 1px center; }
.eq button { height: 12px; border: 0; }
.eq button .i { width: 9px; height: 9px; }
.eq .br { background: #714309; color: #1a1a1a; }
.eq .or { color: #e08a18; }
.eq .gr { background: #686868; color: #1a1a1a; }
.expand { width: 40px; height: 6px; margin: 1px auto 0; }
.ord { display: grid; grid-template-columns: 84px 1fr; }
.ord strong { display: block; height: 12px; line-height: 12px; }
.dl { display: flex; align-items: center; height: 12px; }
.dl .num { width: 22px; margin-left: auto; margin-right: 10px; }
.dl .i { margin-right: 1px; }
.events { table-layout: fixed; width: 100%; margin-top: 3px; border-collapse: collapse; text-align: center; }
.events th, .events td { border: 1px solid #b0b0b0; padding: 0 2px; height: 17px; }
.events th { height: 16px; }
.c1 { width: 41px; } .c2 { width: 43px; } .c3 { width: 19px; } .c4 { width: 34px; } .c5 { width: 36px; } .c6 { width: 44px; } .c7 { width: 36px; } .c8 { width: 31px; } .c9 { width: 32px; } .c11 { width: 36px; }
.events td input[type=checkbox] { display: block; margin: 0 auto; }
.events td, .events td select { padding-left: 1px; padding-right: 1px; }
.events select { display: block; height: 12px; background-position: right 1px center; }
.events .num { height: 12px; width: 28px; text-align: left; margin: 0 auto; }
.events .num svg { height: 10px; }
.ev { display: flex; align-items: center; gap: 2px; padding-left: 1px; }
.ev .i { width: 8px; height: 8px; }
.ud { width: 7px; height: 14px; }
.ic { display: grid; grid-template-columns: repeat(4, 1fr); justify-items: center; }
.ic .i { width: 9px; height: 9px; }
.dim { color: #555; }
.dim .oo { width: 9px; height: 4px; }
.sc { filter: grayscale(1); }
.dfoot { display: flex; align-items: center; height: 13px; margin-top: 4px; }
.add { width: 67px; height: 12px; justify-content: flex-start; gap: 3px; padding: 0 2px; }
.add .car { margin-left: auto; }
.el { display: flex; gap: 4px; margin: 0 5px 0 34px; }
.re { display: flex; gap: 4px; margin: 0 34px 0 7px; }
.ps { width: 67px; gap: 3px; }

.r1 { flex: 94 1 0; } .r2 { flex: 84 1 0; } .r3 { flex: 146 1 0; } .r4 { flex: 180 1 0; }
.right .pbody { padding: 0 0 0 2px; }
.r1 .series { gap: 3px; padding-right: 1px; margin-top: 1px; }
.hfr { display: flex; gap: 3px; height: 43px; margin: 1px 0 2px; padding: 0 2px; background: #a9a9a9; border: 1px solid #888; color: #3060e0; line-height: 7px; }
.hfr .st { color: #ff4010; }
.r1 fieldset { padding-bottom: 4px; }
.r2 fieldset, .fc, .af { padding: 0 2px 2px; }
.t1 { height: 9px; gap: 1px; }
.t2 { height: 11px; gap: 2px; }
.t2 .cl { width: 30px; }
.t2 label { width: 24px; }
.t3 { gap: 2px; height: 12px; justify-content: space-between; }
.t3 .num { width: 20px; }
.t3 button { width: 23px; margin-left: 0; }
.three { display: grid; grid-template-columns: 37fr 39fr 26fr; gap: 3px; margin: 2px 0; }
.fpos { padding: 1px 2px; border-bottom: 0; border-color: #e4e4e4; }
.fx { display: grid; grid-template-columns: 10px 51px auto; align-items: center; height: 9px; }
.fg { display: grid; grid-template-columns: 17px 28fr 28fr 23fr; gap: 2px; align-items: center; }
.io { display: flex; align-items: center; gap: 1px; }
.io .i { width: 6px; }
.af .num { width: 27px; }
.af .row { gap: 1px; }
.af .pair { margin-top: 1px; }
.env { margin-top: 4px; padding: 1px 0 2px 2px; }
.rows { display: grid; grid-template-columns: 10px 48px 1fr 8px; grid-auto-rows: 1fr; height: 98px; align-items: center; }
.rows .i { width: 8px; height: 7px; }
.rows span { line-height: 7px; }
.avg { height: 12px; padding-top: 2px; }

.status { display: flex; align-items: center; flex: none; height: 13px; padding: 0 3px 0 1px; gap: 2px; background: #006400; color: #fff; }
.busy { width: 80px; height: 9px; background: #e6e6e6; padding-left: 12px; }
.busy span { display: block; height: 100%; background: #06b025; }
.status > div:not(.busy) { display: flex; align-items: center; gap: 3px; height: 9px; border-left: 1px solid #fff; padding-left: 2px; font-weight: 600; }
.status .i { width: 7px; height: 7px; color: #3d7f3a; opacity: .8; }
.status .st2 .i, .status .st3 .i { color: #123c10; }
.status .st1 .i:last-child, .status .st4 .i { opacity: .4; }
.status em { width: 7px; height: 7px; border-radius: 50%; background: #2f7a2c; }
.st1 { width: 49px; } .st2 { width: 43px; } .st3 { width: 57px; } .st4 { width: 54px; } .st5 { width: 41px; } .st6 { width: 33px; }
```
